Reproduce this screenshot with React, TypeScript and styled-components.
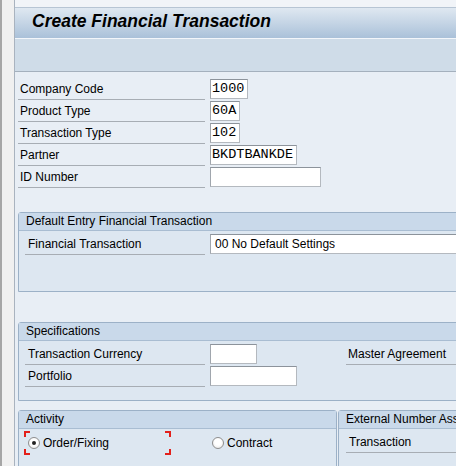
import React from "react";
import styled, { createGlobalStyle } from "styled-components";

const Global = createGlobalStyle`
  html, body { margin: 0; padding: 0; overflow: hidden; background: #f0f2f5; }
  body { font-family: "Liberation Sans", Arial, sans-serif; font-size: 12px; color: #000; }
  * { box-sizing: border-box; }
`;

const Shell = styled.div`
  display: flex;
  align-items: flex-start;
  width: 456px;
  height: 466px;
  overflow: hidden;
  background: #f0f0f0;
`;

const Gutter = styled.div`
  flex: 0 0 14px;
  align-self: stretch;
  border-left: 2px solid #a6a6a6;
  background: #f0f0f0;
`;

const Main = styled.div`
  flex: 0 0 auto;
  width: 720px;
  min-height: 466px;
  display: flex;
  flex-direction: column;
  border-left: 1px solid #a9b3bf;
  background: #e8eef5;
  & > * {
    flex-shrink: 0;
  }
`;

const TopGap = styled.div`
  height: 7px;
  background: #f1f4f8;
`;

const TitleBar = styled.div`
  height: 31px;
  border-top: 1px solid #b7c5d4;
  background: linear-gradient(#dfe8f1, #aac1d9);
  padding-left: 17px;
`;

const Title = styled.h1`
  margin: 0;
  font-family: "Liberation Sans", Arial, sans-serif;
  font-size: 17.5px;
  font-weight: bold;
  font-style: italic;
  line-height: 26px;
  color: #000;
`;

const Toolbar = styled.div`
  height: 34px;
  border-top: 1px solid #f3f6fa;
  border-bottom: 1px solid #a4b0bd;
  background: #cfdce8;
`;

const Content = styled.div`
  padding: 6px 0 0 3px;
  display: flex;
  flex-direction: column;
  & > * {
    flex-shrink: 0;
  }
`;

const FieldList = styled.div`
  display: flex;
  flex-direction: column;
`;

const Row = styled.div`
  display: flex;
  align-items: flex-start;
  height: 22px;
`;

const Label = styled.div<{ $w?: number; $pad?: number }>`
  width: ${(p) => (p.$w ? `${p.$w}px` : "auto")};
  flex: ${(p) => (p.$w ? "0 0 auto" : "1 1 auto")};
  height: 22px;
  padding-top: 1px;
  line-height: 21px;
  padding-left: ${(p) => p.$pad ?? 2}px;
  border-bottom: 1px solid #a7adb4;
  white-space: nowrap;
  color: #000;
`;

const Field = styled.div<{ $w: number; $mono?: boolean }>`
  margin-left: 5px;
  margin-top: 1px;
  width: ${(p) => p.$w}px;
  height: 20px;
  flex: 0 0 auto;
  background: #fff;
  border: 1px solid #b4b9bf;
  border-top-color: #8c939b;
  border-left-color: #a0a6ad;
  padding-left: ${(p) => (p.$mono ? 1 : 4)}px;
  font-family: ${(p) =>
    p.$mono ? '"Liberation Mono", "Courier New", monospace' : '"Liberation Sans", Arial, sans-serif'};
  font-size: ${(p) => (p.$mono ? "13.5px" : "12px")};
  line-height: 18px;
  white-space: nowrap;
  overflow: hidden;
`;

const Group = styled.section<{ $w: number; $top: number }>`
  width: ${(p) => p.$w}px;
  margin-top: ${(p) => p.$top}px;
  border: 1px solid #9cb1c7;
  border-radius: 3px 3px 0 0;
  background: #dde7f1;
  flex: 0 0 auto;
`;

const GroupHeader = styled.div`
  height: 18px;
  line-height: 17px;
  padding-left: 7px;
  background: #c9d9ea;
  border-bottom: 1px solid #a9bdd2;
  white-space: nowrap;
  overflow: hidden;
  color: #000;
`;

const GroupBody = styled.div<{ $h: number }>`
  height: ${(p) => p.$h}px;
  padding: 2px 0 0 6px;
`;

const SpecGrid = styled.div`
  display: grid;
  grid-template-columns: 321px 1fr;
`;

const Column = styled.div`
  display: flex;
  flex-direction: column;
`;

const BottomRow = styled.div`
  display: flex;
  gap: 1px;
  margin-top: 9px;
`;

const ActivityBody = styled.div`
  height: 60px;
  padding: 0;
`;

const RadioRow = styled.div`
  display: flex;
  align-items: center;
  margin-top: 2px;
  margin-left: 5px;
`;

const Focus = styled.div`
  position: relative;
  width: 147px;
  height: 24px;
  display: flex;
  align-items: center;
  padding-left: 4px;
`;

const Corner = styled.span<{ $v: "top" | "bottom"; $h: "left" | "right" }>`
  position: absolute;
  width: 6px;
  height: 6px;
  ${(p) => p.$v}: 0;
  ${(p) => p.$h}: 0;
  border-${(p) => p.$v}: 2px solid #e3201b;
  border-${(p) => p.$h}: 2px solid #e3201b;
`;

const RadioOption = styled.label<{ $gap?: number }>`
  display: flex;
  align-items: center;
  margin-left: ${(p) => p.$gap ?? 0}px;
  white-space: nowrap;
  color: #000;
`;

const RadioDot = styled.span<{ $on?: boolean }>`
  width: 12px;
  height: 12px;
  border-radius: 50%;
  border: 1px solid #8e8e8e;
  background: radial-gradient(circle at 50% 40%, #ffffff 40%, #e2e2e2 100%);
  display: inline-flex;
  align-items: center;
  justify-content: center;
  margin-right: 3px;
  &::after {
    content: "";
    width: 4px;
    height: 4px;
    border-radius: 50%;
    background: ${(p) => (p.$on ? "#222" : "transparent")};
  }
`;

const ExtBody = styled.div`
  height: 60px;
  padding: 2px 0 0 7px;
`;

export default function App() {
  return (
    <>
      <Global />
      <Shell>
        <Gutter />
        <Main>
          <TopGap />
          <TitleBar>
            <Title>Create Financial Transaction</Title>
          </TitleBar>
          <Toolbar />
          <Content>
            <FieldList>
              <Row>
                <Label $w={187}>Company Code</Label>
                <Field $w={38} $mono>1000</Field>
              </Row>
              <Row>
                <Label $w={187}>Product Type</Label>
                <Field $w={30} $mono>60A</Field>
              </Row>
              <Row>
                <Label $w={187}>Transaction Type</Label>
                <Field $w={30} $mono>102</Field>
              </Row>
              <Row>
                <Label $w={187}>Partner</Label>
                <Field $w={87} $mono>BKDTBANKDE</Field>
              </Row>
              <Row>
                <Label $w={187}>ID Number</Label>
                <Field $w={111} $mono></Field>
              </Row>
            </FieldList>

            <Group $w={660} $top={24}>
              <GroupHeader>Default Entry Financial Transaction</GroupHeader>
              <GroupBody $h={60}>
                <Row>
                  <Label $w={180} $pad={3}>Financial Transaction</Label>
                  <Field $w={400}>00 No Default Settings</Field>
                </Row>
              </GroupBody>
            </Group>

            <Group $w={660} $top={30}>
              <GroupHeader>Specifications</GroupHeader>
              <GroupBody $h={59}>
                <SpecGrid>
                  <Column>
                    <Row>
                      <Label $w={180} $pad={3}>Transaction Currency</Label>
                      <Field $w={47} $mono></Field>
                    </Row>
                    <Row>
                      <Label $w={180} $pad={3}>Portfolio</Label>
                      <Field $w={87} $mono></Field>
                    </Row>
                  </Column>
                  <Column>
                    <Row>
                      <Label $pad={2}>Master Agreement</Label>
                    </Row>
                  </Column>
                </SpecGrid>
              </GroupBody>
            </Group>

            <BottomRow>
              <Group $w={319} $top={0}>
                <GroupHeader>Activity</GroupHeader>
                <ActivityBody>
                  <RadioRow>
                    <Focus>
                      <Corner $v="top" $h="left" />
                      <Corner $v="top" $h="right" />
                      <Corner $v="bottom" $h="left" />
                      <Corner $v="bottom" $h="right" />
                      <RadioOption>
                        <RadioDot $on />
                        Order/Fixing
                      </RadioOption>
                    </Focus>
                    <RadioOption $gap={41}>
                      <RadioDot />
                      Contract
                    </RadioOption>
                  </RadioRow>
                </ActivityBody>
              </Group>
              <Group $w={300} $top={0}>
                <GroupHeader>External Number Assignment</GroupHeader>
                <ExtBody>
                  <Row>
                    <Label $pad={3}>Transaction</Label>
                  </Row>
                </ExtBody>
              </Group>
            </BottomRow>
          </Content>
        </Main>
      </Shell>
    </>
  );
}
